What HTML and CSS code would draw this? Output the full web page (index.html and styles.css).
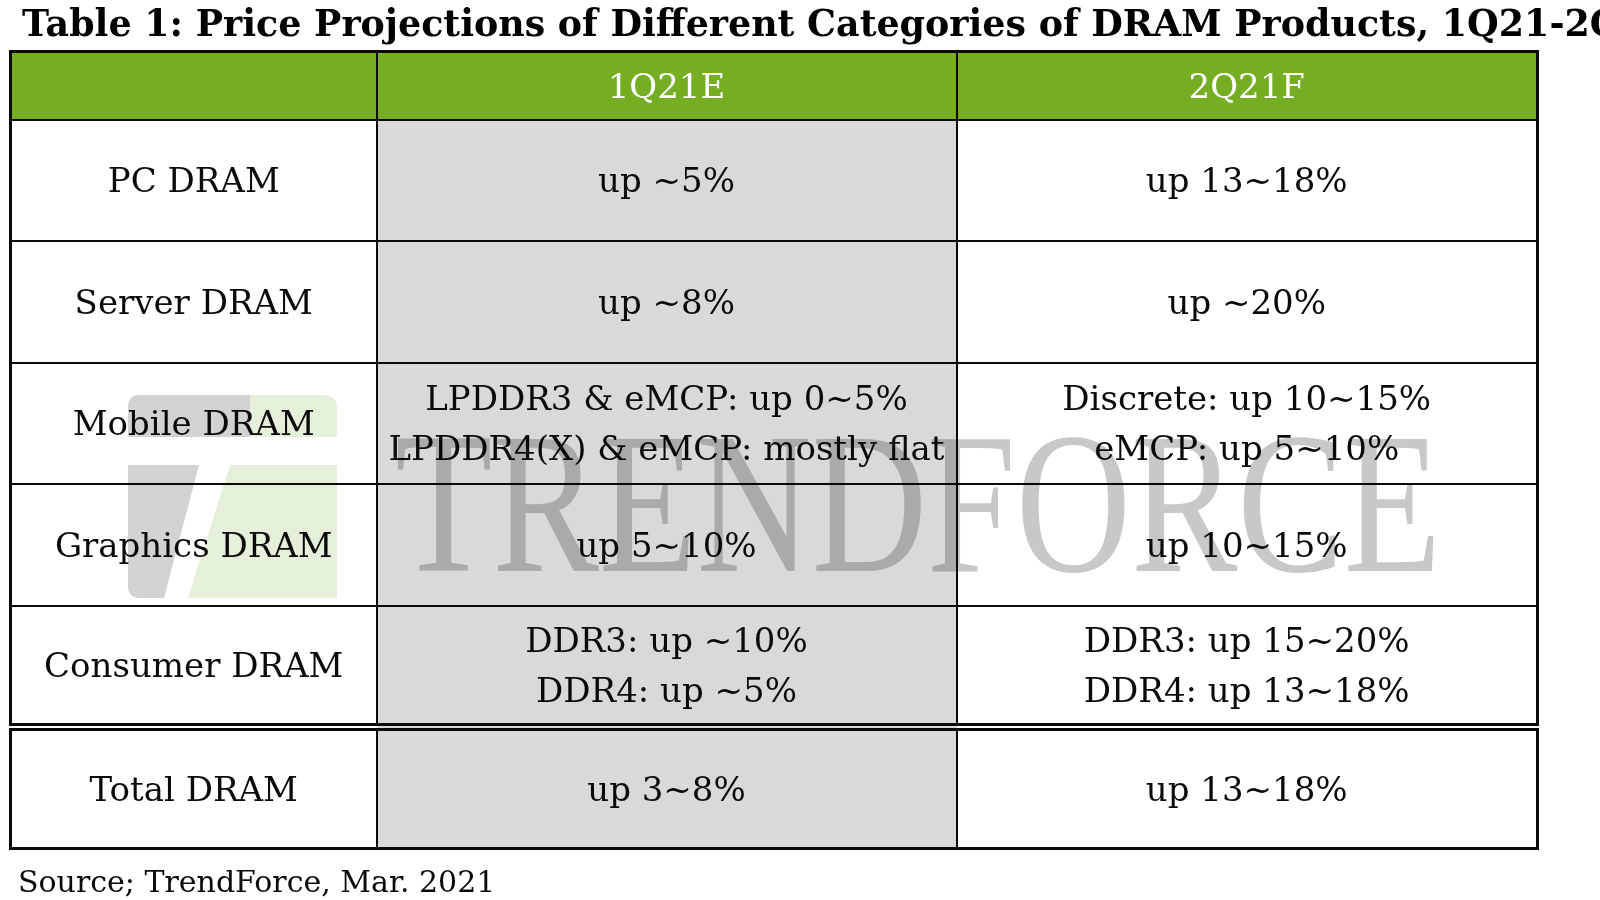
FILE: index.html
```html
<!DOCTYPE html>
<html lang="en">
<head>
<meta charset="utf-8">
<title>Price Projections of DRAM Products</title>
<link rel="stylesheet" href="styles.css">
</head>
<body>
<div class="page">
  <h1 class="title">Table 1: Price Projections of Different Categories of DRAM Products, 1Q21-2Q21</h1>
  <div class="table-wrap">
    <table class="price-table">
      <colgroup>
        <col class="c-label">
        <col class="c-q1">
        <col class="c-q2">
      </colgroup>
      <thead>
        <tr class="head-row">
          <th class="corner"></th>
          <th>1Q21E</th>
          <th>2Q21F</th>
        </tr>
      </thead>
      <tbody>
        <tr class="row-a">
          <th class="label">PC DRAM</th>
          <td class="q1">up ~5%</td>
          <td class="q2">up 13~18%</td>
        </tr>
        <tr class="row-b">
          <th class="label">Server DRAM</th>
          <td class="q1">up ~8%</td>
          <td class="q2">up ~20%</td>
        </tr>
        <tr class="row-a">
          <th class="label">Mobile DRAM</th>
          <td class="q1">LPDDR3 &amp; eMCP: up 0~5%<br>LPDDR4(X) &amp; eMCP: mostly flat</td>
          <td class="q2">Discrete: up 10~15%<br>eMCP: up 5~10%</td>
        </tr>
        <tr class="row-b">
          <th class="label">Graphics DRAM</th>
          <td class="q1">up 5~10%</td>
          <td class="q2">up 10~15%</td>
        </tr>
        <tr class="row-c">
          <th class="label">Consumer DRAM</th>
          <td class="q1">DDR3: up ~10%<br>DDR4: up ~5%</td>
          <td class="q2">DDR3: up 15~20%<br>DDR4: up 13~18%</td>
        </tr>
        <tr class="total-row">
          <th class="label">Total DRAM</th>
          <td class="q1">up 3~8%</td>
          <td class="q2">up 13~18%</td>
        </tr>
      </tbody>
    </table>
    <div class="watermark" aria-hidden="true">
      <svg class="wm-logo" width="209" height="203" viewBox="0 0 209 203">
        <path class="wm-gray" d="M0,42 V12 Q0,0 12,0 H122 V42 Z"/>
        <path class="wm-green" d="M122,0 H195 Q209,0 209,14 V42 H122 Z"/>
        <path class="wm-gray" d="M0,70 H71 L36,203 H12 Q0,203 0,191 Z"/>
        <path class="wm-green" d="M102,70 H209 V203 H60 Z"/>
      </svg>
      <span class="wm-text">TRENDFORCE</span>
    </div>
  </div>
  <p class="source">Source; TrendForce, Mar. 2021</p>
</div>
</body>
</html>
```
FILE: styles.css
```css
html, body {
  margin: 0;
  padding: 0;
  background: #ffffff;
}

body {
  width: 1600px;
  height: 900px;
  overflow: hidden;
  font-family: "DejaVu Serif", serif;
  color: #0a0a0a;
}

.page {
  width: 1600px;
}

.title {
  margin: 0 0 6px 0;
  padding: 3px 0 0 22px;
  height: 41px;
  line-height: 41px;
  font-size: 36.4px;
  font-weight: bold;
  white-space: nowrap;
  color: #000000;
}

.table-wrap {
  position: relative;
  margin-left: 9px;
  width: 1527px;
}

.price-table {
  width: 1527px;
  border-collapse: collapse;
  table-layout: fixed;
  border: 3px solid #0a0a0a;
}

.c-label { width: 366px; }
.c-q1 { width: 580px; }
.c-q2 { width: 581px; }

.price-table th,
.price-table td {
  border: 2px solid #0a0a0a;
  padding: 0;
  text-align: center;
  vertical-align: middle;
  font-size: 34px;
  font-weight: normal;
  line-height: 50px;
  color: #0a0a0a;
}

.head-row {
  height: 68px;
}

.head-row th {
  background: #75ad23;
  color: #ffffff;
}

.row-a { height: 121px; }
.row-b { height: 122px; }
.row-c { height: 121px; }

.total-row { height: 122px; }

.total-row th,
.total-row td {
  border-top: 8px double #0a0a0a;
}

.q1 {
  background: #d9d9d9;
}

.label {
  background: #ffffff;
}

.watermark {
  position: absolute;
  left: 0;
  top: 0;
  width: 1527px;
  height: 800px;
  pointer-events: none;
  mix-blend-mode: multiply;
}

.wm-logo {
  position: absolute;
  left: 119px;
  top: 345px;
}

.wm-gray { fill: #d2d2d2; }
.wm-green { fill: #e4f0d9; }

.wm-text {
  position: absolute;
  left: 386px;
  top: 352px;
  font-family: "Liberation Serif", serif;
  font-size: 202px;
  line-height: 1;
  color: #c8c8c8;
  white-space: nowrap;
  transform: scaleX(0.79);
  transform-origin: left top;
}

.source {
  margin: 14px 0 0 18px;
  font-size: 30px;
  line-height: normal;
  color: #0a0a0a;
  white-space: nowrap;
}
```
